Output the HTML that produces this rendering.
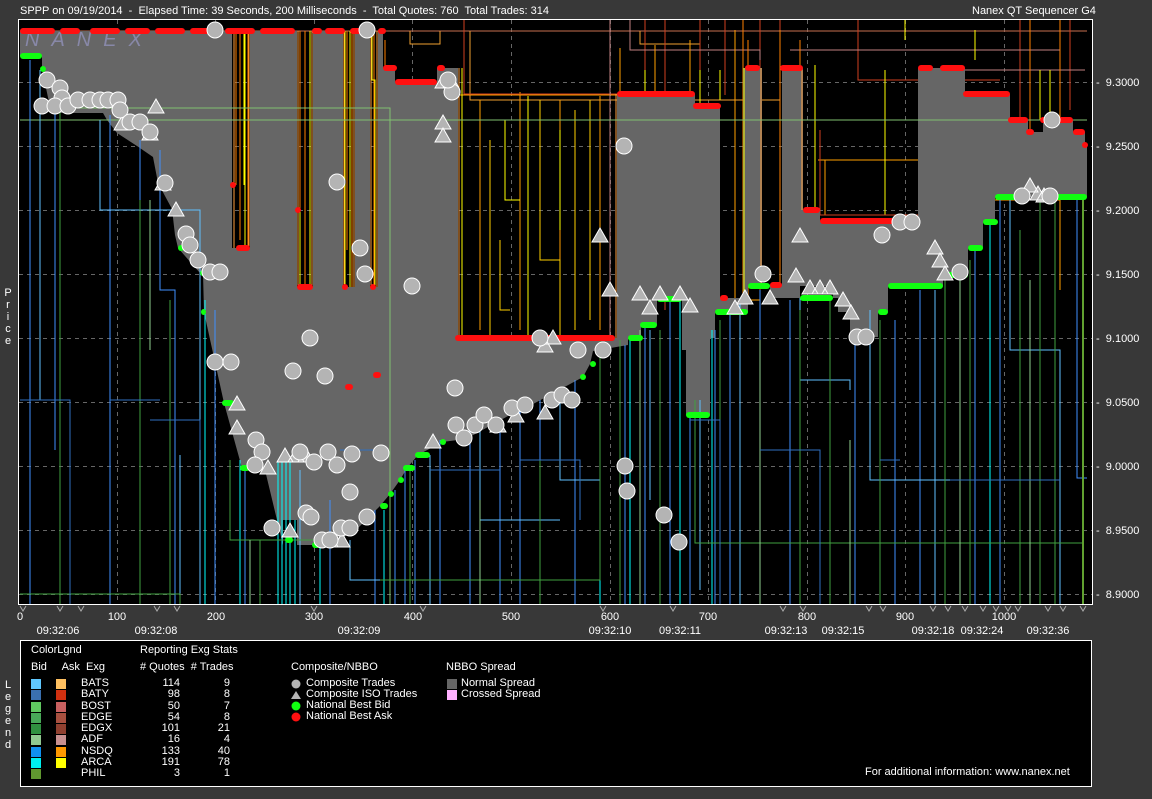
<!DOCTYPE html>
<html><head><meta charset="utf-8"><style>
html,body{margin:0;width:1152px;height:799px;background:#383838;overflow:hidden;font-family:"Liberation Sans",sans-serif;color:#fff;}
.t{position:absolute;font-size:11px;white-space:nowrap;line-height:12px}
.r{text-align:right}
.sw{position:absolute;width:10px;height:10px}
</style></head><body>
<div class="t" style="left:20px;top:5px">SPPP on 09/19/2014&nbsp; -&nbsp; Elapsed Time: 39 Seconds, 200 Milliseconds&nbsp; -&nbsp; Total Quotes: 760&nbsp; Total Trades: 314</div>
<div class="t" style="left:972px;top:5px">Nanex QT Sequencer G4</div>
<svg style="position:absolute;left:0;top:0" width="1152" height="640">
<rect x="18.5" y="19.5" width="1074" height="585" fill="#000" stroke="#fff"/>
<g stroke="#666" stroke-dasharray="4,4" stroke-width="1">
<path d="M19 82.5H1092M19 146.5H1092M19 210.5H1092M19 274.5H1092M19 338.5H1092M19 402.5H1092M19 466.5H1092M19 530.5H1092M19 594.5H1092"/>
<path d="M117.5 20V604M215.5 20V604M314.5 20V604M412.5 20V604M511.5 20V604M610.5 20V604M708.5 20V604M807.5 20V604M905.5 20V604M1004.5 20V604"/>
</g>
<g fill="none" stroke-width="1">
<path stroke="#c87050" d="M20 31H1087"/>
<path stroke="#f0a030" d="M410 31V44H440V31M470 31V100H780V31M640 31V44H700V31"/>
<path stroke="#ffa000" d="M460 95H620V338M480 100V330M520 92V330M560 100V330M600 96V330"/>
<path stroke="#ffd000" d="M490 140V336M540 100V260H560V336M575 110V330M590 100V320M500 240V310H510"/>
<path stroke="#ffff00" d="M528 96V338M505 120V200H520M560 130V230"/>
<path stroke="#d04020" d="M464 20V94H617M645 20V300M665 20V310M700 20V330M725 20V95M760 20V290M780 20V200M858 20V80H1000M1020 20V130M1070 20V110"/>
<path stroke="#c08080" d="M610 20V338M630 20V50H760V60M790 50H1060V70M950 70H1085"/>
<path stroke="#ffa000" d="M620 48V338M655 45V300H680M690 40V320M735 30V300H760M818 160H960M825 160V215M940 200H1060V290"/>
<path stroke="#ffff00" d="M645 70V96H695M700 70V320M720 70V100M800 70V215M815 65V215M885 70V215M1040 70V120M1050 70V130M905 20V40M975 30V60"/>
<path stroke="#ff8000" d="M743 20V300M748 40V300M780 30V290M800 40V180M1030 20V140M1060 20V130"/>
<path stroke="#d04020" d="M820 130V215H960V70M1020 100V140"/>
<path stroke="#ff8000" d="M236 31V185M240 31V240M248 31V248M300 31V210M305 31V287M347 31V250M352 31V287M374 31V287M385 40V100H395"/>
<path stroke="#ffff00" d="M244 31V185M300 210V287M345 31V287M372 31V80H375V287"/>
</g>
<path fill="#666" d="M20 31H232V248H250V31H297V287H313V31H343V287H355V31H370V287H378V31H383V68H395V82H437V68H458V338H617V94H695V106H720V298H743V68H762V285H782V68H803V210H820V221H918V68H965V94H1010V120H1028V132H1043V120H1073V132H1085V145H1087V197H995V222H983V248H968V275H943V286H888V312H878V337H850V312H838V298H833V286H800V298H770V286H748V312H715V338H710V415H686V350H682V299H657V325H641V338H628V345L593 351L590 364L583 377L535 403L510 415L466 439L442 442L418 455L407 468L400 480L390 494L380 506L352 534L318 545H297V520H283V545L265 470L242 468L224 403L204 312L203 273H200L178 248L175 235L172 209L158 183L153 157L137 146L117 133L107 120L103 113H53L50 107L42 69V56H20Z"/>
<g fill="none" stroke-width="1">
<path stroke="#ffa040" d="M234 31V248M249 31V248M298 31V287M312 31V287M344 31V287M354 31V287M371 31V287M377 31V287M459 68V338M616 94V338M744 68V298M761 68V285M802 68V210"/>
<path stroke="#ffff00" d="M245 31V248M310 31V287M350 31V287M462 68V338M744 68V298"/>
<path stroke="#80c070" d="M20 120H1087M60 108H390V604"/>
</g>
<text x="25" y="46" font-family="Liberation Sans" font-style="italic" font-size="20" fill="#8888a8" letter-spacing="12">NANEX</text>
<g fill="none" stroke-width="1">
<path stroke="#4090ff" d="M30 60V604M55 110V450M110 115V604M140 140V604M160 150V290H175V604M175 300V604M215 310V604M245 470V604M330 500V604M375 510V604M395 490V604M405 470V604M415 460V604M440 440V604M470 430V604M500 420V604M520 410V604M540 400V604M575 380V604M600 340V604M625 345V604M645 325V604M670 300V604M690 415V604M715 330V604M730 310V604M760 290V604M790 300V604M855 340V604M895 320V604M920 290V604M975 250V604M990 220V604M1000 200V604M1077 197V478H1087"/>
<path stroke="#60c0ff" d="M40 70V400M100 120V210H200V604M180 455V604M300 470V604M350 540V580H390M430 455V604M480 430V520H560M560 400V480H600M650 330V500M700 400V590M740 300V604M800 298V380H850V390M870 310V480H1060M935 290V604M1010 200V350H1060V604"/>
<path stroke="#00ffff" d="M205 300V604M240 460V604M278 460V604M282 460V604M286 460V604M290 460V604M295 520V604M320 540V604M384 510V604M600 350V604M630 340V604M680 300V604M712 330V604M990 220V604"/>
<path stroke="#40a040" d="M20 594H180V604M60 90V604M140 200V604M170 300V604M230 460V540H330M260 540V604M380 580H600V340M410 470V604M540 460V604M620 340V604M660 330V604M695 400V543H1083V604M720 320V604M760 360V604M800 310V604M830 300V604M880 320V604M945 280V604M970 260V604M1020 230V604M1040 200V604M1055 200V604"/>
<path stroke="#90d090" d="M150 200V350M250 540V604M480 500V604M640 330V604M760 340V604M850 440V604M960 270V604M1030 280V604"/>
<path stroke="#60a030" stroke-width="2" d="M1083 197V604"/>
<path stroke="#3070c0" d="M20 400H70V604M110 400H160M150 420H200V450M340 450H380M430 470H500M520 460H580V520M690 420H720V604M760 450H820V604M880 460H900M950 480H1060"/>
</g>
<g fill="#ff1010">
<rect x="20" y="28" width="35" height="6" rx="3"/><rect x="60" y="28" width="20" height="6" rx="3"/><rect x="90" y="28" width="30" height="6" rx="3"/><rect x="125" y="28" width="25" height="6" rx="3"/><rect x="155" y="28" width="30" height="6" rx="3"/><rect x="190" y="28" width="20" height="6" rx="3"/><rect x="225" y="28" width="30" height="6" rx="3"/><rect x="260" y="28" width="35" height="6" rx="3"/><rect x="312" y="28" width="10" height="6" rx="3"/><rect x="325" y="28" width="20" height="6" rx="3"/><rect x="350" y="28" width="12" height="6" rx="3"/><rect x="378" y="28" width="8" height="6" rx="3"/>
<rect x="230" y="182" width="6" height="6" rx="3"/><rect x="236" y="245" width="14" height="6" rx="3"/><rect x="295" y="207" width="6" height="6" rx="3"/><rect x="297" y="284" width="16" height="6" rx="3"/><rect x="342" y="284" width="6" height="6" rx="3"/><rect x="370" y="284" width="6" height="6" rx="3"/><rect x="345" y="384" width="8" height="6" rx="3"/><rect x="373" y="372" width="8" height="6" rx="3"/>
<rect x="383" y="65" width="14" height="6" rx="3"/><rect x="395" y="79" width="42" height="6" rx="3"/><rect x="437" y="65" width="8" height="6" rx="3"/>
<rect x="455" y="335" width="160" height="6" rx="3"/>
<rect x="617" y="91" width="78" height="6" rx="3"/><rect x="693" y="103" width="28" height="6" rx="3"/><rect x="745" y="65" width="15" height="6" rx="3"/><rect x="780" y="65" width="23" height="6" rx="3"/><rect x="803" y="207" width="17" height="6" rx="3"/><rect x="820" y="218" width="90" height="6" rx="3"/><rect x="918" y="65" width="15" height="6" rx="3"/><rect x="940" y="65" width="25" height="6" rx="3"/><rect x="963" y="91" width="47" height="6" rx="3"/><rect x="1008" y="117" width="20" height="6" rx="3"/><rect x="1026" y="129" width="8" height="6" rx="3"/><rect x="1040" y="117" width="33" height="6" rx="3"/><rect x="1073" y="129" width="12" height="6" rx="3"/><rect x="1082" y="142" width="6" height="6" rx="3"/>
<rect x="720" y="295" width="8" height="6" rx="3"/><rect x="770" y="282" width="12" height="6" rx="3"/>
</g>
<g fill="#10ff10">
<rect x="20" y="53" width="22" height="6" rx="3"/><rect x="40" y="66" width="6" height="6" rx="3"/><rect x="178" y="245" width="6" height="6" rx="3"/><rect x="200" y="270" width="6" height="6" rx="3"/><rect x="201" y="309" width="5" height="6" rx="3"/><rect x="222" y="400" width="12" height="6" rx="3"/><rect x="240" y="465" width="10" height="6" rx="3"/><rect x="285" y="537" width="8" height="6" rx="3"/><rect x="312" y="542" width="8" height="6" rx="3"/><rect x="380" y="503" width="8" height="6" rx="3"/><rect x="388" y="491" width="6" height="6" rx="3"/><rect x="398" y="477" width="6" height="6" rx="3"/><rect x="403" y="465" width="12" height="6" rx="3"/><rect x="415" y="452" width="15" height="6" rx="3"/><rect x="440" y="439" width="6" height="6" rx="3"/><rect x="580" y="374" width="6" height="6" rx="3"/><rect x="590" y="361" width="6" height="6" rx="3"/><rect x="628" y="335" width="15" height="6" rx="3"/><rect x="640" y="322" width="17" height="6" rx="3"/><rect x="657" y="296" width="25" height="6" rx="3"/><rect x="686" y="412" width="24" height="6" rx="3"/><rect x="715" y="309" width="33" height="6" rx="3"/><rect x="748" y="283" width="22" height="6" rx="3"/><rect x="800" y="295" width="33" height="6" rx="3"/><rect x="878" y="309" width="10" height="6" rx="3"/><rect x="888" y="283" width="55" height="6" rx="3"/><rect x="943" y="272" width="25" height="6" rx="3"/><rect x="968" y="245" width="15" height="6" rx="3"/><rect x="983" y="219" width="15" height="6" rx="3"/><rect x="995" y="194" width="35" height="6" rx="3"/><rect x="1055" y="194" width="32" height="6" rx="3"/>
</g>
<g fill="#b4b4b4" stroke="#fff" stroke-width="1">
<path d="M156 99l8 14h-16zM122 116l8 14h-16zM150 126l8 14h-16zM163 176l8 14h-16zM176 202l8 14h-16zM237 420l8 14h-16zM237 396l8 14h-16zM268 460l8 14h-16zM285 448l8 14h-16zM296 448l8 14h-16zM306 448l8 14h-16zM290 523l8 14h-16zM330 533l8 14h-16zM342 533l8 14h-16zM443 74l8 14h-16zM451 74l8 14h-16zM443 115l8 14h-16zM443 128l8 14h-16zM545 338l8 14h-16zM553 330l8 14h-16zM433 434l8 14h-16zM498 418l8 14h-16zM516 408l8 14h-16zM545 405l8 14h-16zM800 228l8 14h-16zM735 300l8 14h-16zM745 290l8 14h-16zM770 290l8 14h-16zM796 268l8 14h-16zM810 280l8 14h-16zM820 280l8 14h-16zM830 280l8 14h-16zM843 292l8 14h-16zM851 305l8 14h-16zM935 240l8 14h-16zM940 253l8 14h-16zM945 266l8 14h-16zM1030 178l8 14h-16zM1038 186l8 14h-16zM1044 188l8 14h-16zM600 228l8 14h-16zM640 286l8 14h-16zM660 286l8 14h-16zM680 286l8 14h-16zM690 298l8 14h-16zM650 300l8 14h-16zM610 282l8 14h-16z"/>
</g>
<g fill="#b4b4b4" stroke="#fff" stroke-width="1">
<circle cx="215" cy="30" r="8"/><circle cx="367" cy="30" r="8"/><circle cx="47" cy="80" r="8"/><circle cx="60" cy="88" r="8"/><circle cx="62" cy="98" r="8"/><circle cx="42" cy="106" r="8"/><circle cx="55" cy="106" r="8"/><circle cx="68" cy="106" r="8"/><circle cx="78" cy="100" r="8"/><circle cx="90" cy="100" r="8"/><circle cx="100" cy="100" r="8"/><circle cx="108" cy="100" r="8"/><circle cx="118" cy="100" r="8"/><circle cx="120" cy="110" r="8"/><circle cx="130" cy="122" r="8"/><circle cx="140" cy="122" r="8"/><circle cx="150" cy="132" r="8"/><circle cx="165" cy="183" r="8"/><circle cx="186" cy="234" r="8"/><circle cx="190" cy="245" r="8"/><circle cx="198" cy="260" r="8"/><circle cx="210" cy="272" r="8"/><circle cx="220" cy="272" r="8"/><circle cx="215" cy="362" r="8"/><circle cx="231" cy="362" r="8"/><circle cx="256" cy="440" r="8"/><circle cx="262" cy="452" r="8"/><circle cx="255" cy="465" r="8"/><circle cx="272" cy="528" r="8"/><circle cx="306" cy="513" r="8"/><circle cx="311" cy="517" r="8"/><circle cx="322" cy="540" r="8"/><circle cx="330" cy="540" r="8"/><circle cx="341" cy="528" r="8"/><circle cx="350" cy="528" r="8"/><circle cx="367" cy="517" r="8"/><circle cx="337" cy="182" r="8"/><circle cx="412" cy="286" r="8"/><circle cx="360" cy="248" r="8"/><circle cx="365" cy="274" r="8"/><circle cx="293" cy="371" r="8"/><circle cx="310" cy="338" r="8"/><circle cx="325" cy="376" r="8"/><circle cx="300" cy="452" r="8"/><circle cx="314" cy="462" r="8"/><circle cx="328" cy="452" r="8"/><circle cx="337" cy="465" r="8"/><circle cx="350" cy="492" r="8"/><circle cx="352" cy="454" r="8"/><circle cx="381" cy="453" r="8"/><circle cx="455" cy="388" r="8"/><circle cx="452" cy="92" r="8"/><circle cx="448" cy="80" r="8"/><circle cx="456" cy="425" r="8"/><circle cx="464" cy="438" r="8"/><circle cx="475" cy="425" r="8"/><circle cx="484" cy="415" r="8"/><circle cx="496" cy="425" r="8"/><circle cx="512" cy="408" r="8"/><circle cx="525" cy="405" r="8"/><circle cx="540" cy="338" r="8"/><circle cx="552" cy="400" r="8"/><circle cx="562" cy="395" r="8"/><circle cx="572" cy="400" r="8"/><circle cx="578" cy="350" r="8"/><circle cx="603" cy="350" r="8"/><circle cx="624" cy="146" r="8"/><circle cx="625" cy="466" r="8"/><circle cx="627" cy="491" r="8"/><circle cx="664" cy="515" r="8"/><circle cx="679" cy="542" r="8"/><circle cx="763" cy="274" r="8"/><circle cx="857" cy="337" r="8"/><circle cx="866" cy="337" r="8"/><circle cx="882" cy="235" r="8"/><circle cx="900" cy="222" r="8"/><circle cx="912" cy="222" r="8"/><circle cx="960" cy="272" r="8"/><circle cx="1052" cy="120" r="8"/><circle cx="1050" cy="196" r="8"/><circle cx="1022" cy="196" r="8"/>
</g>
<g fill="none" stroke="#aaa"><path d="M20 606l3 5 3-5M57 606l3 5 3-5M78 606l3 5 3-5M154 606l3 5 3-5M174 606l3 5 3-5M311 606l3 5 3-5M420 606l3 5 3-5M600 606l3 5 3-5M670 606l3 5 3-5M780 606l3 5 3-5M800 606l3 5 3-5M866 606l3 5 3-5M880 606l3 5 3-5M930 606l3 5 3-5M945 606l3 5 3-5M962 606l3 5 3-5M980 606l3 5 3-5M993 606l3 5 3-5M1005 606l3 5 3-5M1015 606l3 5 3-5M1045 606l3 5 3-5M1060 606l3 5 3-5M1080 606l3 5 3-5"/></g>
<g font-family="Liberation Sans" font-size="11" fill="#fff">
<text x="1096" y="86">-&#160; 9.3000</text><text x="1096" y="150">-&#160; 9.2500</text><text x="1096" y="214">-&#160; 9.2000</text><text x="1096" y="278">-&#160; 9.1500</text><text x="1096" y="342">-&#160; 9.1000</text><text x="1096" y="406">-&#160; 9.0500</text><text x="1096" y="470">-&#160; 9.0000</text><text x="1096" y="534">-&#160; 8.9500</text><text x="1096" y="598">-&#160; 8.9000</text>
<g text-anchor="middle">
<text x="20" y="620">0</text><text x="117" y="620">100</text><text x="216" y="620">200</text><text x="314" y="620">300</text><text x="413" y="620">400</text><text x="511" y="620">500</text><text x="610" y="620">600</text><text x="708" y="620">700</text><text x="807" y="620">800</text><text x="905" y="620">900</text><text x="1004" y="620">1000</text>
<text x="58" y="634">09:32:06</text><text x="156" y="634">09:32:08</text><text x="359" y="634">09:32:09</text><text x="610" y="634">09:32:10</text><text x="680" y="634">09:32:11</text><text x="786" y="634">09:32:13</text><text x="843" y="634">09:32:15</text><text x="933" y="634">09:32:18</text><text x="982" y="634">09:32:24</text><text x="1048" y="634">09:32:36</text>
<text x="8" y="296">P</text><text x="8" y="308">r</text><text x="8" y="320">i</text><text x="8" y="332">c</text><text x="8" y="344">e</text>
</g></g>
</svg>
<svg style="position:absolute;left:0;top:638px" width="1152" height="150">
<rect x="20.5" y="2.5" width="1071" height="146" fill="#000" stroke="#fff"/>
<g font-family="Liberation Sans" font-size="11" fill="#fff" text-anchor="middle">
<text x="8" y="50">L</text><text x="8" y="62">e</text><text x="8" y="74">g</text><text x="8" y="86">e</text><text x="8" y="98">n</text><text x="8" y="110">d</text>
</g>
</svg>
<div class="t" style="left:31px;top:644px">ColorLgnd</div>
<div class="t" style="left:31px;top:661px">Bid&nbsp;&nbsp;&nbsp;&nbsp; Ask&nbsp; Exg</div>
<div class="t" style="left:140px;top:644px">Reporting Exg Stats</div>
<div class="t" style="left:140px;top:661px"># Quotes&nbsp; # Trades</div>
<div class="t" style="left:291px;top:661px">Composite/NBBO</div>
<div class="t" style="left:446px;top:661px">NBBO Spread</div>
<div style="position:absolute;left:31px;top:679px">
<div class="sw" style="left:0;top:0;background:#60c8ff"></div><div class="sw" style="left:25px;top:0;background:#ffc060"></div>
<div class="sw" style="left:0;top:11.25px;background:#3a70b0"></div><div class="sw" style="left:25px;top:11.25px;background:#d03010"></div>
<div class="sw" style="left:0;top:22.5px;background:#60c860"></div><div class="sw" style="left:25px;top:22.5px;background:#c86060"></div>
<div class="sw" style="left:0;top:33.75px;background:#48a858"></div><div class="sw" style="left:25px;top:33.75px;background:#a85040"></div>
<div class="sw" style="left:0;top:45px;background:#309040"></div><div class="sw" style="left:25px;top:45px;background:#904030"></div>
<div class="sw" style="left:0;top:56.25px;background:#90c890"></div><div class="sw" style="left:25px;top:56.25px;background:#c89090"></div>
<div class="sw" style="left:0;top:67.5px;background:#1090f0"></div><div class="sw" style="left:25px;top:67.5px;background:#ff9800"></div>
<div class="sw" style="left:0;top:78.75px;background:#00f0f0"></div><div class="sw" style="left:25px;top:78.75px;background:#ffff00"></div>
<div class="sw" style="left:0;top:90px;background:#609830"></div>
</div>
<div class="t" style="left:81px;top:678px;line-height:11.25px">BATS<br>BATY<br>BOST<br>EDGE<br>EDGX<br>ADF<br>NSDQ<br>ARCA<br>PHIL</div>
<div class="t r" style="left:140px;width:40px;top:678px;line-height:11.25px">114<br>98<br>50<br>54<br>101<br>16<br>133<br>191<br>3</div>
<div class="t r" style="left:190px;width:40px;top:678px;line-height:11.25px">9<br>8<br>7<br>8<br>21<br>4<br>40<br>78<br>1</div>
<svg style="position:absolute;left:290px;top:678px" width="20" height="48"><circle cx="6" cy="6" r="4.5" fill="#b4b4b4"/><path d="M6 13l5 8H1z" fill="#b4b4b4"/><circle cx="6" cy="28" r="4.5" fill="#10ff10"/><circle cx="6" cy="39" r="4.5" fill="#ff1010"/></svg>
<div class="t" style="left:306px;top:678px;line-height:11px">Composite Trades<br>Composite ISO Trades<br>National Best Bid<br>National Best Ask</div>
<div class="sw" style="left:447px;top:679px;background:#666"></div><div class="sw" style="left:447px;top:690px;background:#ffb0ff"></div>
<div class="t" style="left:461px;top:678px;line-height:11px">Normal Spread<br>Crossed Spread</div>
<div class="t" style="left:865px;top:766px">For additional information: www.nanex.net</div>
</body></html>
